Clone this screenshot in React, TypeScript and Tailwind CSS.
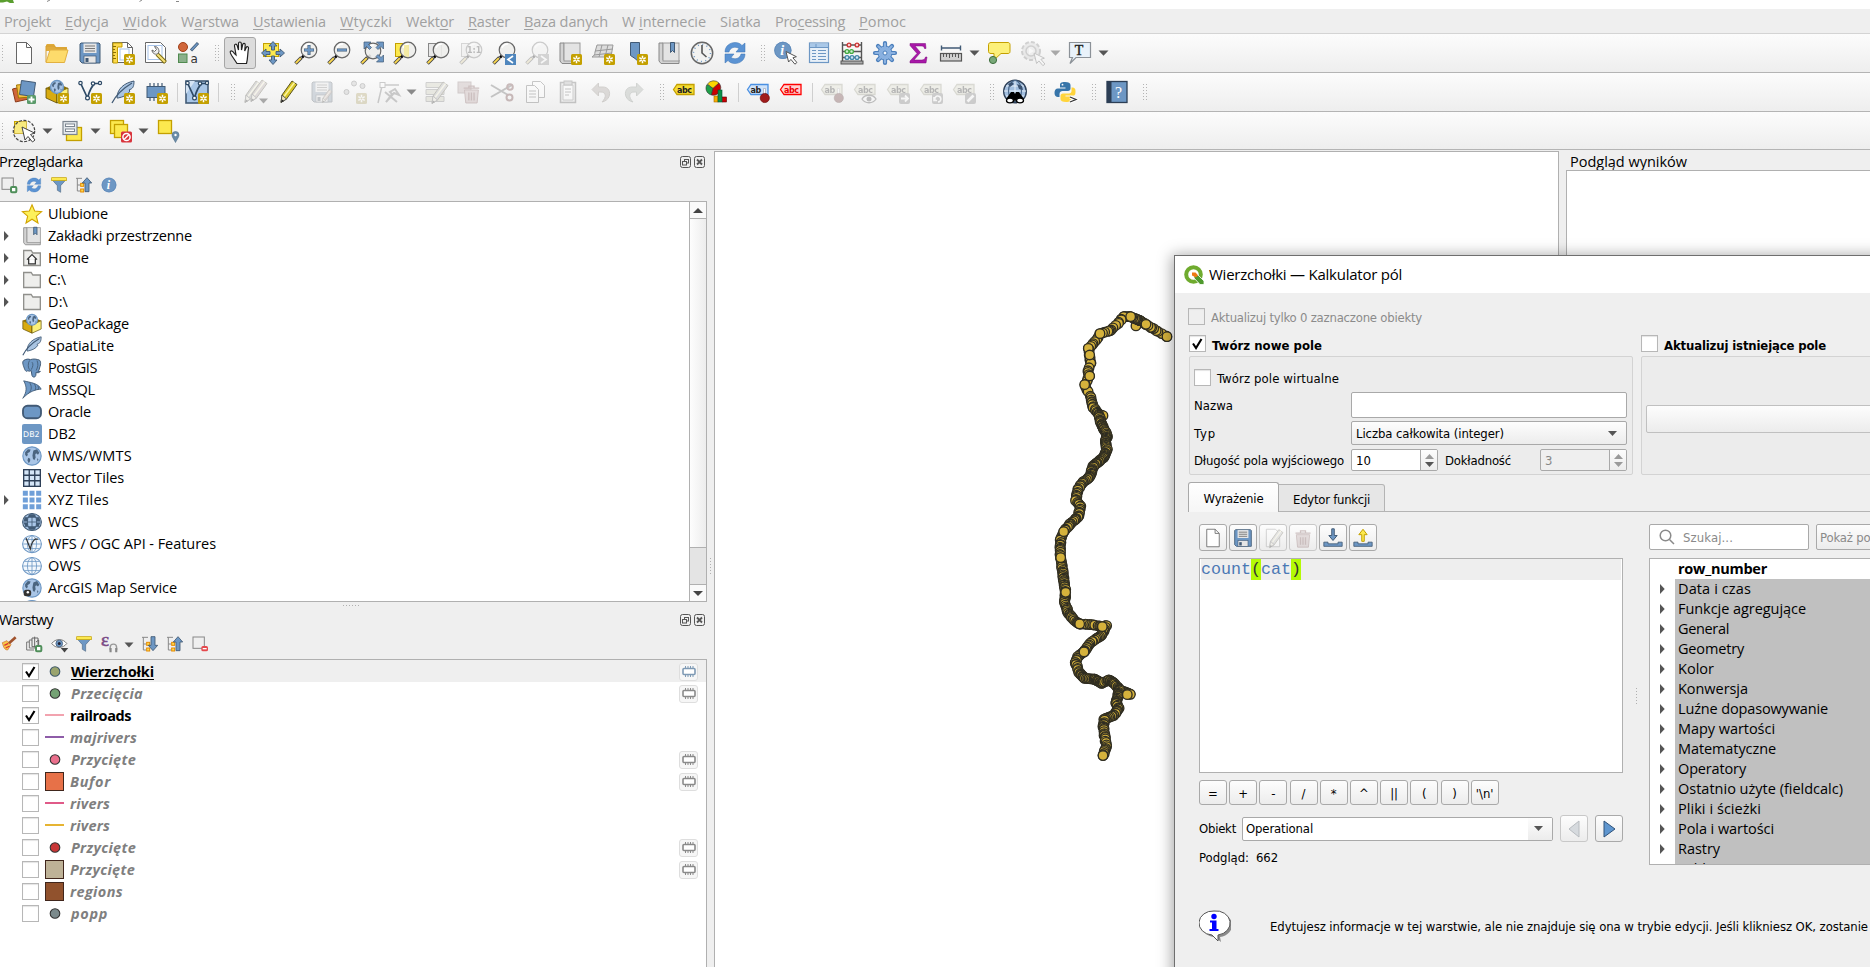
import React, { useLayoutEffect, useRef, useState } from "react";

type Kids = { children?: React.ReactNode };

/** Text that is tracked so that it takes up exactly `w` pixels. */
function T({ w, className = "", children }: Kids & { w: number; className?: string }) {
  const ref = useRef<HTMLSpanElement>(null);
  const [ls, setLs] = useState(0);
  useLayoutEffect(() => {
    const el = ref.current;
    if (!el) return;
    const n = (el.textContent || "").length;
    setLs((w + 1 - el.getBoundingClientRect().width) / n);
  }, [w]);
  return (
    <span ref={ref} className={"inline-block shrink-0 whitespace-pre " + className} style={{ letterSpacing: ls + "px" }}>
      {children}
    </span>
  );
}

function I({ children, s = 24, off = false, className = "" }: Kids & { s?: number; off?: boolean; className?: string }) {
  return (
    <svg
      width={s}
      height={s}
      viewBox="0 0 24 24"
      fill="none"
      className={"shrink-0 overflow-visible " + (off ? "opacity-30 grayscale-[60%] " : "") + className}
    >
      {children}
    </svg>
  );
}

/* ---------- shared drawing parts ---------- */
const BL = "#6d97c4";
const DB = "#415a75";

const NewBadge = () => (
  <g>
    <rect x="13" y="13" width="11" height="11" rx="1.500" fill="#c4a000" />
    <path d="M18.500 14.800v7.400M15.300 16.700l6.400 3.600M21.700 16.700l-6.400 3.600" stroke="#fff" strokeWidth="1.500" />
    <circle cx="18.500" cy="18.500" r="1" fill="#c4a000" />
  </g>
);
const Page = () => <path d="M4 1.500h11l5 5v16H4z" fill="#fff" stroke="#666" />;
const Lens = ({ x = 15, y = 9 }: { x?: number; y?: number }) => (
  <g>
    <path d="M8 16.500l2.500-2.500" stroke="#000" strokeWidth="2.500" />
    <path d="M1.500 22.500l6-6" stroke="#444" strokeWidth="3.600" />
    <path d="M1.800 22.200l5-5" stroke="#fcd94f" strokeWidth="1.900" />
    <circle cx={x} cy={y} r="7.800" fill="#eeeeec" fillOpacity="0.900" stroke="#666" strokeWidth="1.200" />
    <path d={`M${x - 5} ${y - 2}a6 6 0 0 1 6-4`} stroke="#fff" strokeWidth="1.500" />
  </g>
);
const Cursor = ({ x = 12, y = 11 }: { x?: number; y?: number }) => (
  <path transform={`translate(${x} ${y})`} d="M0 0l2.600 10.500 2.300-2.600 4 4.800 2-1.700-4-4.700 3.500-1.100z" fill="#fff" stroke="#555" />
);
const Disk = () => (
  <g>
    <path d="M3 2h18l1 1v19H4l-2-2V3z" fill={BL} stroke={DB} />
    <rect x="5.500" y="2.500" width="13" height="9.500" fill="#e6e6e6" />
    <path d="M7 5h10M7 7.500h10M7 10h10" stroke="#777" strokeWidth="1.100" />
    <rect x="6" y="15" width="12" height="7" fill="#e6e6e6" stroke={DB} strokeWidth="0.700" />
    <rect x="7.500" y="17" width="3" height="4" fill={DB} />
  </g>
);
const Globe = ({ cx = 12, cy = 12, r = 10, fill = "#a9c5e6" }: { cx?: number; cy?: number; r?: number; fill?: string }) => (
  <g>
    <circle cx={cx} cy={cy} r={r} fill={fill} stroke={BL} strokeWidth="1.400" />
    <g transform={`translate(${cx - r} ${cy - r}) scale(${r / 10})`} fill="#4b6580">
      <path d="M2.500 6l3-3.500 3 .5-1 2.500-2.500 1.500.5 2-1.500 1.500-1.500-2zM6 12l2 1v2.500l-1.500 2.500-1.500-3.500zM11.500 4l4-1.500 2.500 4-1.500 2-2-1.500-1 1.500.5 3-1.500 3-1.500-1.500-.5-3.500.500-3zM15.500 12.500l1.500 1-1 2.500z" />
    </g>
  </g>
);
const GridGlobe = ({ dark = false }: { dark?: boolean }) => (
  <g>
    <ellipse cx="12" cy="12" rx="11.300" ry="10.300" fill={dark ? "#a9c6e8" : "#f3f8fd"} stroke={dark ? DB : BL} strokeWidth="1.300" />
    <path d="M1.500 12h21M3.500 6.500h17M3.500 17.500h17M12 1.500v21" stroke={dark ? DB : BL} />
    <ellipse cx="12" cy="12" rx="5.500" ry="10" stroke={dark ? DB : BL} />
    {dark && <path d="M3 7h4v4H2zM17 7h4l1 4h-5zM2 13h5v4H4zM17 13h5l-2 4h-3zM8 3h8v3H8zM8 18h8v3H8z" fill={DB} />}
  </g>
);
const Feather = () => (
  <g>
    <path d="M6 18C6 9 13 3 23 1c0 5-1 7-3 8l-2 1 1 1c-2 4-7 6-12 7z" fill="#a9c4e2" stroke={DB} />
    <path d="M1 23C5 15 11 9 21 3" stroke={DB} strokeWidth="1.300" />
  </g>
);
const VNodes = ({ c = "#2e4a66" }: { c?: string }) => (
  <g stroke={c} strokeWidth="1.200">
    <path d="M2.500 3l7 15c2-8 4-12 8-15M15 3.500h7" strokeWidth="1.700" />
    <circle cx="2.500" cy="3" r="1.700" fill="#fff" />
    <circle cx="9.500" cy="18" r="1.900" fill="#fff" />
    <circle cx="15" cy="3.500" r="1.700" fill="#fff" />
    <circle cx="22" cy="3" r="1.600" fill="#fff" />
  </g>
);
const Box3 = () => (
  <g>
    <path d="M1 8l11 5v10L1 18z" fill="#d8ab10" stroke="#5c4a00" strokeWidth="0.800" />
    <path d="M23 8l-11 5v10l11-5z" fill="#fcf078" stroke="#5c4a00" strokeWidth="0.800" />
    <path d="M1 8l11-5 11 5-11 5z" fill="#8a6d00" />
    <Globe cx={12} cy={7} r={6.500} />
  </g>
);
const Pencil = ({ c = "#d8c62a" }: { c?: string }) => (
  <g>
    <path d="M5 15L15 1l5 3.500L9.500 19 4 22.500z" fill={c} stroke="#5a5320" />
    <path d="M7 16.500L17.500 2.500" stroke="#fbf4a0" strokeWidth="1.500" />
    <path d="M5 15l4.500 4L4 22.500z" fill="#efe5c0" stroke="#555" />
    <path d="M4 22.500l1-3 2 1.500z" fill="#222" />
  </g>
);
const Trash = () => (
  <g stroke="#a03a3a">
    <path d="M4 8h16l-1.500 15h-13z" fill="#d69a9a" />
    <path d="M3 6h18M9 6V3.500h6V6M9 11v9M12 11v9M15 11v9" strokeWidth="1.500" />
  </g>
);
const Refresh = () => (
  <g fill="#5b93d3" stroke="#3b73b3" strokeWidth="0.500">
    <path d="M2 11C2 5 7 1.500 12 1.500c3 0 5.500 1 7 3L22 2v9h-9l3-3.500c-4-2.500-9-1-10 3.500z" />
    <path d="M22 13c0 6-5 9.500-10 9.500-3 0-5.500-1-7-3L2 22v-9h9l-3 3.500c4 2.500 9 1 10-3.500z" />
  </g>
);
const Tag = ({ fill = "#fce94f", st = "#c4a000", tx = "#222", t = "abc" }: { fill?: string; st?: string; tx?: string; t?: string }) => (
  <g>
    <path d="M1.500 9.500L5 4.500h17v10H5z" fill={fill} stroke={st} strokeWidth="1.300" />
    <text x={t === "ab" ? 4.500 : 5} y="12.500" fontSize="8" fontWeight="700" fill={tx} fontFamily="DejaVu Sans, sans-serif" letterSpacing="-0.500">
      {t}
    </text>
  </g>
);
const Pin = () => (
  <g>
    <path d="M17.500 8.500l2 0v8h-2z" fill="#fff" stroke="#889" strokeWidth="0.500" />
    <circle cx="18.800" cy="18" r="4.600" fill="#a01c1c" stroke="#600" strokeWidth="0.600" />
  </g>
);
const Bookm = () => (
  <g>
    <path d="M2 2h4v17h16v3.500H4L2 20z" fill="#d3d3d3" stroke="#888" />
    <rect x="6" y="2" width="16" height="18" fill="#e3e3e3" stroke="#999" />
  </g>
);
const Funnel = () => (
  <g>
    <path d="M1.500 4h21l-8 9v10l-5-3v-7z" fill={BL} stroke={DB} strokeWidth="0.800" />
    <rect x="1" y="1" width="22" height="4.500" fill="#fce94f" stroke="#c4a000" />
  </g>
);
const TreeArrow = ({ down = false }: { down?: boolean }) => (
  <g>
    <path d="M0 2h9M2 2v19h4M2 12h4" stroke="#888" strokeWidth="1.500" />
    <rect x="7" y="9.500" width="4.500" height="4.500" fill="#fcd94f" stroke="#e58a00" strokeWidth="1.500" />
    <rect x="7" y="18" width="4.500" height="4.500" fill="#fcd94f" stroke="#e58a00" strokeWidth="1.500" />
    <path transform={down ? "rotate(180 16.500 11.500)" : undefined} d="M16.500 1l7 8h-4v13h-6V9h-4z" fill={BL} stroke={DB} strokeWidth="1.300" />
  </g>
);
const Info = () => (
  <g>
    <circle cx="12" cy="12" r="11" fill={BL} />
    <circle cx="12" cy="12" r="10.500" stroke="#5b87b8" />
    <text x="8.500" y="18.500" fontSize="18" fontStyle="italic" fontWeight="700" fill="#fff" fontFamily="Liberation Serif, serif">
      i
    </text>
  </g>
);
const Folder = () => <path d="M2 3h9l2 3h9v15H2z" fill="#eeeeec" stroke="#90908c" strokeWidth="1.600" />;

/* ---------- bars ---------- */
const Handle = () => (
  <svg width="18" height="18" viewBox="0 0 18 18" className="shrink-0">
    <path d="M5.500 1v17M8.500 1v17" stroke="#b4b4b4" strokeDasharray="1 2" />
  </svg>
);
const EdgeHandle = () => (
  <svg width="12" height="18" viewBox="0 0 12 18" className="shrink-0">
    <path d="M2.500 1v17" stroke="#b4b4b4" strokeDasharray="1 2" />
  </svg>
);
const Sep = () => <div className="h-[19px] w-2 shrink-0 border-l border-[#cfcfcf]" />;
const Down = ({ off = false, mid = false }: { off?: boolean; mid?: boolean }) => (
  <svg width="15" height="6" viewBox="0 0 15 6" className="shrink-0 overflow-visible">
    <path d="M-2.500 0.500h10L2.500 5.700z" fill={off ? "#a8a8a8" : mid ? "#8a8a8a" : "#555"} />
  </svg>
);
const S = ({ children }: Kids) => <div className="mr-[9px] h-6 w-6 shrink-0">{children}</div>;

const Bar = ({ children, last = false }: Kids & { last?: boolean }) => (
  <div
    className={
      "flex shrink-0 items-center border-b border-[#b4b4b4] bg-gradient-to-b from-[#fcfcfc] to-[#eeeeee] " + (last ? "h-[38px]" : "h-[39px]")
    }
  >
    <EdgeHandle />
    {children}
  </div>
);

const MENU: [string, string, string, number][] = [
  ["Pro", "j", "ekt", 46],
  ["", "E", "dycja", 43],
  ["", "W", "idok", 43],
  ["W", "a", "rstwa", 57],
  ["", "U", "stawienia", 72],
  ["", "W", "tyczki", 51],
  ["Wekt", "o", "r", 47],
  ["", "R", "aster", 41],
  ["", "B", "aza danych", 83],
  ["W ", "i", "nternecie", 83],
  ["Siatka", "", "", 40],
  ["Pro", "c", "essing", 69],
  ["", "P", "omoc", 46],
];

function Toolbar1() {
  return (
    <Bar>
      <S><I><path d="M4.500 1.500h10l5 5v16h-15z" fill="#fff" stroke="#666" /><path d="M14.500 1.500v5h5" stroke="#666" /></I></S>
      <S><I><path d="M1 4l1-1h7l2 3h11v4H1z" fill="#e0ab3c" /><path d="M1 21V5l2 0h6l2 2h10v3" stroke="#d6a032" /><path d="M1 21.500L5 9h18l-3.500 12.500z" fill="#fddb6b" stroke="#e2b040" /></I></S>
      <S><I><Disk /></I></S>
      <S><I><path d="M1.500 1.500h15l5 5v15h-20z" fill="#fff" stroke="#666" /><path d="M2 2h9v4H6.500v16H2z" fill="#fcd94f" stroke="#c4a000" /><path d="M2 5.500h3M2 8.500h2M2 11.500h3M2 14.500h2M2 17.500h3" stroke="#8a6d00" /><rect x="9" y="8" width="9" height="11" stroke="#a8c4ea" /><path d="M16.500 1.500v5h5" stroke="#666" /><NewBadge /></I></S>
      <S><I><path d="M1.500 3.500V1.500h15l5 5v15h-20z" fill="#fff" stroke="#666" /><rect x="4" y="4.500" width="14" height="14" stroke="#a8c4ea" fill="#fff" /><path d="M13 13l8.500 8.500" stroke="#7a6a10" strokeWidth="4" /><path d="M13 13l8 8" stroke="#f6e07a" strokeWidth="2.200" /><path d="M8 9c0 3 3 5 5.500 4l1.500-2c0-4-2-5.500-4.500-5.500l2 3-2 2z" fill="#eee" stroke="#666" /></I></S>
      <S><I><circle cx="6" cy="6" r="4.500" fill="#d0663a" stroke="#a0401a" /><rect x="1.500" y="13" width="8.500" height="8.500" fill="#8bb08b" stroke="#4f8a4f" /><path d="M14 9.500l7-7.500" stroke={DB} strokeWidth="3" /><path d="M14.500 9l6-6.500" stroke={BL} strokeWidth="1.600" /><text x="13.500" y="22" fontSize="12" fill="#333" fontFamily="DejaVu Sans, sans-serif">a</text></I></S>
      <Handle />
      <div className="-ml-1 mr-[5px] flex h-8 w-8 shrink-0 items-center justify-center rounded-[3px] border border-[#a6a6a6] bg-[#dcdcdc]">
        <I><path d="M9 22.500L4 15c-1.500-2.500-2.500-4-1.500-4.800 1-.7 2.500.3 4 2.500L8 14 6.500 5c-.3-2 2-2.500 2.600-.6L10.500 9V2.500c0-2 2.700-2 2.800 0L13.500 9l1.200-5.500c.5-1.800 2.700-1.300 2.500.5L16.700 10l1.500-3.500c.7-1.500 2.600-.8 2.300.8C19.500 12 20 17 18.500 22.500z" fill="#fff" stroke="#222" strokeWidth="1.200" /></I>
      </div>
      <S><I><rect x="2.500" y="2.500" width="15" height="13" fill="#fce94f" stroke="#c4a000" /><g fill={BL} stroke={DB} strokeWidth="0.900"><path d="M12 0.500l4 4.500h-2.500v4h-3V5H8zM12 23.500l4-4.500h-2.500v-4h-3v4H8zM0.500 12L5 8v2.500h4v3H5V16zM23.500 12L19 8v2.500h-4v3h4V16z" /></g></I></S>
      <S><I><Lens /><path d="M15 4v10M10 9h10" stroke={DB} strokeWidth="3" /><path d="M15 4.500v9M10.500 9h9" stroke={BL} strokeWidth="1.800" /></I></S>
      <S><I><Lens /><path d="M10 9h10" stroke={DB} strokeWidth="3" /><path d="M10.500 9h9" stroke={BL} strokeWidth="1.800" /></I></S>
      <S><I><Lens x={13} y={10} /><g fill={BL} stroke={DB} strokeWidth="0.700"><path d="M4 1h7L8.500 3.500l3 3-2 2-3-3L4 8zM23.500 1v7L21 5.500l-3 3-2-2 3-3L16.500 1zM23.500 21h-7l2.500-2.500-3-3 2-2 3 3 2.500-2.500z" /></g></I></S>
      <S><I><rect x="2.500" y="2.500" width="13" height="13" fill="#fce94f" stroke="#c4a000" /><Lens /><path d="M11 4h5v12a7 7 0 0 1-5-2z" fill="#f5e98a" fillOpacity="0.700" /></I></S>
      <S><I><rect x="2.500" y="2.500" width="13" height="13" fill="#e8e8e8" stroke="#888" /><Lens /></I></S>
      <S><I off><rect x="2.500" y="2.500" width="13" height="13" fill="#e8e8e8" stroke="#888" /><Lens /><text x="8" y="12" fontSize="8" fontWeight="700" fill="#333" fontFamily="DejaVu Sans">1:1</text></I></S>
      <S><I><Lens /><rect x="13" y="13" width="11" height="11" fill="#4f86bd" /><path d="M21 15l-5 3.500 5 3.500" stroke="#fff" strokeWidth="1.700" /></I></S>
      <S><I off><Lens /><rect x="13" y="13" width="11" height="11" fill="#888" /><path d="M16 15l5 3.500-5 3.500" stroke="#fff" strokeWidth="1.700" /></I></S>
      <S><I><Bookm /><NewBadge /></I></S>
      <S><I><path d="M6 4h16l-2 12H1c2-1 3-3 3-5z" fill="#dcdcdc" stroke="#999" /><path d="M4 10l18-2M3 14l18-2M11 4L8 16M17 4l-3 12" stroke="#999" /><NewBadge /></I></S>
      <S><I><path d="M6.500 1.500h9v20l-4.500-4-4.500-3z" fill={BL} stroke={DB} /><NewBadge /></I></S>
      <S><I><Bookm /><path d="M13.500 1.500h4v10l-2-2-2 2z" fill={BL} stroke={DB} /></I></S>
      <S><I><circle cx="12" cy="12" r="10.700" fill="#f2f2f0" stroke="#666" strokeWidth="1.500" /><circle cx="12" cy="12" r="8.500" stroke={BL} strokeDasharray="1 3.450" strokeWidth="1.500" /><path d="M12 4v8l4.500 4" stroke="#555" strokeWidth="1.600" /></I></S>
      <S><I><Refresh /></I></S>
      <Handle />
      <S><I><g transform="translate(-0.500 0) scale(0.780)"><Info /></g><Cursor x={12} y={10.500} /></I></S>
      <S><I><rect x="2.500" y="2" width="19" height="19.500" fill="#e8f0f8" stroke={BL} strokeWidth="1.200" /><rect x="3" y="2.500" width="18" height="4" fill="#a9c8e8" /><path d="M3 6.500h18M9 3v3" stroke={BL} /><path d="M5 9.500h4M11 9.500h8M5 12.500h4M11 12.500h8M5 15.500h4M11 15.500h8M5 18.500h4M11 18.500h8" stroke={BL} /></I></S>
      <S><I><path d="M2.500 1v20M21.500 1v20M2 4h20M2 10.500h20M2 16.500h20" stroke="#555" strokeWidth="1.400" /><rect x="1" y="20" width="22" height="3" fill="#aaa" stroke="#555" /><g fill="#fbd0d0" stroke="#c33" strokeWidth="1.300"><circle cx="9" cy="4" r="1.900" /><circle cx="17" cy="4" r="1.900" /></g><g fill="#d0f0d0" stroke="#4a4" strokeWidth="1.300"><circle cx="7" cy="10.500" r="1.900" /><circle cx="11.500" cy="10.500" r="1.900" /></g><g fill="#d0e4f6" stroke="#48a" strokeWidth="1.300"><circle cx="7" cy="16.500" r="1.900" /><circle cx="12" cy="16.500" r="1.900" /><circle cx="17" cy="16.500" r="1.900" /></g></I></S>
      <S><I><path d="M12 2v20M2 12h20M5 5l14 14M19 5L5 19" stroke="#4a7ebb" strokeWidth="4.200" strokeLinecap="round" /><circle cx="12" cy="12" r="7" fill="#8ab1e0" stroke="#4a7ebb" /><path d="M12 2.500v19M2.500 12h19M5.300 5.300l13.400 13.400M18.700 5.300L5.300 18.700" stroke="#8ab1e0" strokeWidth="2.200" strokeLinecap="round" /><circle cx="12" cy="12" r="2" fill="#f4f8fc" stroke="#4a7ebb" /></I></S>
      <S><I><path d="M4 2.500h15.500l.5 5h-1.500c-.5-2-1.500-2.500-3.500-2.500H9l5.500 6.500L8 19h7.500c2.500 0 3.500-1 4-3H21l-1 6H4v-2l7-7.500L4 4.500z" fill="#a818a8" stroke="#7a0a7a" strokeWidth="0.500" /></I></S>
      <S><I><path d="M2 7h20M2.500 4.500v5M21.500 4.500v5" stroke={DB} strokeWidth="1.400" /><rect x="1.500" y="12.500" width="21" height="7.500" fill="#d0d0d0" stroke="#555" strokeWidth="1.200" /><path d="M4.500 13v3M7.500 13v3M10.500 13v4M13.500 13v3M16.500 13v3M19.500 13v4" stroke="#555" /></I></S>
      <Down />
      <S><I><path d="M4 1.500h17c1.200 0 2 1 2 2v7c0 1.500-1 2-2 2h-7L7 19V12.500H4c-1.500 0-2.500-.8-2.500-2v-7c0-1 1-2 2.500-2z" fill="#fcf07a" stroke="#c4a000" /><circle cx="6" cy="19" r="3.600" fill="#78a878" stroke="#3f6f3f" /></I></S>
      <S><I off><circle cx="11" cy="10" r="9" fill="#ccc" stroke="#777" strokeDasharray="4 2" strokeWidth="2" /><circle cx="11" cy="10" r="5" fill="#ddd" stroke="#777" strokeWidth="1.500" /><path d="M9 7l5 3-5 3z" fill="#fff" /><Cursor x={14} y={12} /></I></S>
      <Down off />
      <S><I><path d="M1.500 1.500h21v15H8l-6 6 2.500-6h-3z" fill="#e9f2fa" stroke="#8c9298" strokeWidth="1.200" /><text x="6.800" y="13.800" fontSize="14" fill="#222" stroke="#222" strokeWidth="0.400" fontFamily="Liberation Serif, serif">T</text></I></S>
      <Down />
    </Bar>
  );
}

function Toolbar2() {
  return (
    <Bar>
      <S><I><path d="M0.500 9l13-3 3 13-13 3z" fill="#d0663a" stroke="#8a3a1a" /><path d="M4.500 5l12-1 2 13-12 1z" fill="#f2c040" stroke="#a07800" /><path d="M9.500 0.500l14 2-2 14-14-2z" fill={BL} stroke={DB} /><rect x="15" y="15" width="9" height="9" rx="1.500" fill="#5a9a6a" /><path d="M19.500 16.500v6M16.500 19.500h6" stroke="#fff" strokeWidth="1.800" /></I></S>
      <S><I><Box3 /><NewBadge /></I></S>
      <S><I><VNodes /><NewBadge /></I></S>
      <S><I><Feather /><NewBadge /></I></S>
      <S><I><path d="M6 3v18M10 3v18M14 3v18M18 3v18" stroke={DB} strokeWidth="1.200" /><rect x="3" y="6.500" width="18" height="11" fill={BL} stroke={DB} /><NewBadge /></I></S>
      <Sep />
      <S><I><rect x="1" y="1" width="22" height="22" fill="#a9c6e6" stroke={DB} strokeWidth="1.600" /><path d="M1 1h9L1 14z" fill="#d5e4f4" /><VNodes /><NewBadge /></I></S>
      <Sep />
      <Handle />
      <S><I off><g transform="translate(-3 0)"><Pencil c="#999" /></g><g transform="translate(3 -1)"><Pencil c="#b99" /></g><path d="M15 18.500h9l-4.500 5z" fill="#000" /></I></S>
      <S><I><Pencil /></I></S>
      <S><I off><Disk /><g transform="translate(10 9) scale(0.600)"><Pencil c="#c99" /></g></I></S>
      <S><I off><g fill="#bbb" stroke="#666"><circle cx="3.500" cy="12" r="2.500" /><circle cx="11" cy="3.500" r="2.500" /><circle cx="19.500" cy="6" r="2.500" /></g><NewBadge /></I></S>
      <S><I off><path d="M6 6L2 23M8 5h15" stroke="#666" strokeWidth="1.500" /><rect x="4" y="2.500" width="5" height="5" fill="#fff" stroke="#666" /><path d="M10 22l8-9 5 2-4-6-5 3 2 2zM9 12l12 10" stroke="#666" strokeWidth="2" /></I></S>
      <Down mid />
      <S><I off><path d="M2 2.500h18v5H2zM2 9.500h18v5H2zM2 16.500h18v5H2z" fill="#cc9" stroke="#777" /><g transform="translate(4 1)"><Pencil c="#aaa" /></g></I></S>
      <S><I off><rect x="1" y="2" width="13" height="11" fill="#c99" stroke="#966" /><g transform="translate(4 3) scale(0.870)"><Trash /></g></I></S>
      <S><I off><path d="M1 5l17 10M1 17L22 5" stroke="#555" strokeWidth="2" /><circle cx="19.500" cy="17.500" r="3" stroke="#922" strokeWidth="2" /><circle cx="20" cy="7" r="2.800" stroke="#922" strokeWidth="2" /></I></S>
      <S><I off><path d="M9.500 1.500h8l4 4v12h-12z" fill="#fff" stroke="#555" /><path d="M3.500 5.500h8l4 4v13h-12z" fill="#fff" stroke="#555" /><path d="M6 11h7M6 14h7M6 17h7" stroke="#555" /></I></S>
      <S><I off><rect x="4.500" y="2.500" width="15" height="20" fill="#ddd" stroke="#555" strokeWidth="1.500" /><path d="M7 5h10v15H7z" fill="#fff" stroke="#777" /><rect x="8" y="1" width="8" height="4" fill="#aaa" stroke="#555" /><path d="M9 9h6M9 12h6M9 15h4" stroke="#555" /></I></S>
      <S><I off><path d="M3 9.500L9.500 3v4H14c9 0 9 13-1 15 5-5 4-10-1-10H9.500v4z" fill="#a98" stroke="#876" /></I></S>
      <S><I off><path d="M21 9.500L14.500 3v4H10C1 7 1 20 11 22 6 17 7 12 12 12h2.500v4z" fill="#9a9" stroke="#787" /></I></S>
      <div className="-mr-[1px] flex shrink-0"><Handle /></div>
      <S><I><Tag fill="#f5dc35" /></I></S>
      <S><I><path d="M8 8.500L2.500 4A7.500 7.500 0 0 1 14 3z" fill="#fcd500" stroke="#333" strokeWidth="0.600" /><path d="M8 8.500L2 4.500A7 7 0 0 0 6.500 15z" fill="#1fa04a" stroke="#333" strokeWidth="0.600" /><path d="M8 8.500L14 3a7.500 7.500 0 0 1-7.500 12z" fill="#c00" stroke="#333" strokeWidth="0.600" /><rect x="9" y="16" width="4" height="6" fill="#f6b000" stroke="#a60" strokeWidth="0.600" /><rect x="13" y="10" width="4" height="12" fill="#0d9048" stroke="#053" strokeWidth="0.600" /><rect x="17.500" y="17" width="4" height="5" fill="#c00" stroke="#500" strokeWidth="0.600" /></I></S>
      <Sep />
      <S><I><Tag fill="#cfe3fa" st="#4a90e2" t="ab" /><Pin /></I></S>
      <S><I><Tag fill="#ffd0d0" st="#f00" tx="#e00" /></I></S>
      <Sep />
      <S><I off><Tag fill="#dda" st="#996" t="ab" /><Pin /></I></S>
      <S><I off><Tag fill="#dda" st="#996" /><path d="M9 19c3-5 11-5 14 0-3 5-11 5-14 0z" fill="#fff" stroke="#444" strokeWidth="1.300" /><circle cx="16" cy="19" r="2.500" fill="#444" /></I></S>
      <S><I off><Tag fill="#dda" st="#996" /><rect x="13" y="13" width="11" height="11" rx="2" fill="#777" /><path d="M15 18.500h7M19 15.500l3 3-3 3" stroke="#fff" strokeWidth="1.800" /></I></S>
      <S><I off><Tag fill="#dda" st="#996" /><rect x="13" y="13" width="11" height="11" rx="2" fill="#777" /><path d="M16 20a3 3 0 1 1 3 2M15 17v3.500h3" stroke="#fff" strokeWidth="1.600" /></I></S>
      <S><I off><Tag fill="#dda" st="#996" /><rect x="13" y="13" width="11" height="11" rx="2" fill="#777" /><path d="M15.500 21.500l6-6" stroke="#fff" strokeWidth="2.600" /></I></S>
      <Handle />
      <S><I><circle cx="12" cy="11.500" r="11.300" fill="#a3bfdf" stroke="#2e4058" strokeWidth="1.400" /><path d="M1 11h22M3 6h18M12 0v22M3 16h18" stroke="#eef4fb" strokeWidth="0.900" /><ellipse cx="12" cy="11" rx="6.500" ry="10.500" stroke="#4c6a8c" strokeWidth="1.200" /><path d="M5 4l4-2 2 2-4 3zM14 4l5 2 1 4-4-1z" fill="#3b5270" /><path d="M8 12h3l1 2 1-2h3l5 7v3h-8l-1-2-1 2H3v-3z" fill="#000" /><ellipse cx="7" cy="20.500" rx="3.500" ry="2.400" fill="#fff" stroke="#000" strokeWidth="1.300" /><ellipse cx="17" cy="20.500" rx="3.500" ry="2.400" fill="#fff" stroke="#000" strokeWidth="1.300" /></I></S>
      <Handle />
      <S><I><path d="M11 2c-4 0-5 1-5 3v2.500h5.500v1H4c-2.500 0-3.500 2-3.500 4.500S2 17 4 17h1.500v-3c0-2 1.500-3 3-3H14c1.500 0 2.500-1 2.500-2.500V5c0-2-2-3-5.500-3z" fill="#3775a9" /><circle cx="8.500" cy="4.700" r="0.900" fill="#fff" /><path d="M12 22c4 0 5-1 5-3v-2.500h-5.500v-1h7.500c2.500 0 2.500-2 2.500-4.500 0-2-1-3.500-3-3.500H17.500V11c0 1.500-1 2.500-2.500 2.500H9c-1.500 0-2.500 1-2.500 2.500V19c0 2 2 3 5.500 3z" fill="#ffd43b" /><path d="M16 17l6 2.500-6 2.500" stroke="#fff" strokeWidth="3" /><path d="M16 17l6 2.500-6 2.500" stroke="#333" strokeWidth="1.300" /></I></S>
      <Handle />
      <S><I><rect x="2" y="1.500" width="20" height="21" fill={BL} stroke="#2c3e55" strokeWidth="1.300" /><rect x="2" y="1.500" width="4.500" height="21" fill="#2c3e55" /><text x="10" y="17.500" fontSize="16" fill="#fff" fontFamily="Liberation Serif, serif">?</text></I></S>
      <Handle />
    </Bar>
  );
}

function Toolbar3() {
  return (
    <Bar last>
      <S><I><rect x="2.500" y="2.500" width="12" height="12" fill="#fce94f" stroke="#c4a000" /><circle cx="12" cy="12" r="10.700" fill="#eee" fillOpacity="0.300" stroke="#444" strokeWidth="1.200" strokeDasharray="3 1.500" /><path d="M10 8l3 13 3-3.500 4.500 5.500 2.500-2-4.500-5.500 4-1.500z" fill="#fff" stroke="#444" /></I></S>
      <Down />
      <S><I><rect x="6.500" y="8.500" width="15" height="13" fill="#fce94f" stroke="#c4a000" strokeWidth="1.300" /><rect x="3" y="2.500" width="14" height="13" fill="#e4e8ec" stroke="#7c8590" strokeWidth="1.200" /><rect x="5.500" y="5" width="9" height="2.500" fill="#fff" stroke="#7c8590" /><rect x="5.500" y="10" width="9" height="2.500" fill="#fff" stroke="#7c8590" /></I></S>
      <Down />
      <S><I><rect x="2.500" y="1.500" width="13" height="13" fill="#fce94f" stroke="#c4a000" strokeWidth="1.300" /><rect x="6.500" y="5.500" width="13" height="13" fill="#fce94f" stroke="#c4a000" strokeWidth="1.300" /><rect x="13" y="12.500" width="11" height="11" rx="1.500" fill="#d8343c" /><circle cx="18.500" cy="18" r="3.600" stroke="#fff" strokeWidth="1.500" /><path d="M16 20.500l5-5" stroke="#fff" strokeWidth="1.500" /></I></S>
      <Down />
      <S><I><rect x="2.500" y="1.500" width="13" height="13" fill="#fce94f" stroke="#c4a000" strokeWidth="1.300" /><path d="M19.500 23.500c-2-4-3.500-5.500-3.500-7.500a3.500 3.500 0 0 1 7 0c0 2-1.500 3.500-3.500 7.500z" fill="#6a8ca8" stroke="#4f6f8a" strokeWidth="0.600" /><circle cx="19.500" cy="16" r="1.200" fill="#fff" /></I></S>
    </Bar>
  );
}

/* ---------- docks ---------- */
const DockButtons = () => (
  <div className="mr-[2px] flex gap-[3px]">
    <svg width="11" height="12" viewBox="0 0 11 12" fill="none" stroke="#555"><rect x="0.500" y="0.500" width="10" height="11" rx="2" /><rect x="4.500" y="3.500" width="4" height="3.500" /><rect x="2.500" y="5.500" width="4" height="3.500" fill="#efefef" /></svg>
    <svg width="11" height="12" viewBox="0 0 11 12" fill="none" stroke="#555"><rect x="0.500" y="0.500" width="10" height="11" rx="2" /><path d="M3 3.500l5 5M8 3.500l-5 5" strokeWidth="1.800" /></svg>
  </div>
);

const RightTri = ({ className = "" }: { className?: string }) => (
  <svg width="6" height="10" viewBox="0 0 6 10" className={"shrink-0 " + className}><path d="M0 0L4.700 5 0 10z" fill="#555" /></svg>
);

const TREE: [string, number, boolean, React.ReactNode][] = [
  ["Ulubione", 59, false, <path d="M12 1l3.200 7.500 8.300.7-6.300 5.300 2 8.300L12 18.300l-7.200 4.500 2-8.300L.5 9.200l8.300-.7z" fill="#fdf15a" stroke="#d2a400" strokeWidth="1.300" />],
  ["Zakładki przestrzenne", 143, true, <g><Bookm /><path d="M14 1.500h4v9l-2-2-2 2z" fill={BL} stroke={DB} /></g>],
  ["Home", 40, true, <g><Folder /><path d="M6 14l6-6 6 6M8 13v6h8v-6" stroke="#333" strokeWidth="1.500" fill="#fff" /></g>],
  ["C:\\", 17, true, <Folder />],
  ["D:\\", 19, true, <Folder />],
  ["GeoPackage", 80, false, <Box3 />],
  ["SpatiaLite", 65, false, <Feather />],
  ["PostGIS", 48, false, <g><path d="M2 3c3-2 6-2 8-1 3-1 6-1 9 0 4 0 4 5 2 10 0 2-1 3-2 4h3c-1 2-4 2-5 1l-.5 4c-.5 2.500-4 2.500-4.500 0L11 15c-2 1-3 1-4 0-1 2-3 1-4-2S-.5 5 2 3z" fill={BL} stroke={DB} strokeWidth="1.200" /><path d="M9 3c-2 3-2 9 0 11M18 3c2 4 1 8-1 12M12 5c2 2 1 6-1 9" stroke={DB} /></g>],
  ["MSSQL", 46, false, <g><path d="M2 1c8 2 18 3 21 10-6 0-15 3-22 11 5-8 5-14 1-21z" fill={BL} stroke={DB} /><path d="M9 3c3 4 3 9-1 13M15 5c2 3 2 6 0 8M19 7c1 2 1 3 0 5" stroke={DB} /></g>],
  ["Oracle", 42, false, <rect x="1.200" y="4.500" width="21.600" height="15" rx="5.500" fill={BL} stroke={DB} strokeWidth="2.200" />],
  ["DB2", 27, false, <g><rect width="24" height="24" rx="2.500" fill={BL} /><text x="1.300" y="15" fontSize="9.500" fill="#fff" fontFamily="DejaVu Sans, sans-serif">DB2</text></g>],
  ["WMS/WMTS", 83, false, <Globe r={11} />],
  ["Vector Tiles", 75, false, <g><rect x="2" y="2" width="20" height="20" fill="#d4e5f7" stroke="#2e4058" strokeWidth="1.600" /><path d="M8.700 2v20M15.300 2v20M2 8.700h20M2 15.300h20" stroke="#2e4058" strokeWidth="1.600" /></g>],
  ["XYZ Tiles", 60, true, <path d="M1 1h6v6H1zM9 1h6v6H9zM17 1h6v6h-6zM1 9h6v6H1zM9 9h6v6H9zM17 9h6v6h-6zM1 17h6v6H1zM9 17h6v6H9zM17 17h6v6h-6z" fill="#6f9fd8" />],
  ["WCS", 30, false, <GridGlobe dark />],
  ["WFS / OGC API - Features", 167, false, <g><GridGlobe /><path d="M5 5l5 13c1-6 3-10 6-12h3" stroke="#333" strokeWidth="1.500" /></g>],
  ["OWS", 32, false, <GridGlobe />],
  ["ArcGIS Map Service", 128, false, <g><Globe r={11} /><rect x="2" y="14" width="9" height="8" rx="3" fill="#333" /><circle cx="7" cy="17" r="1.500" fill="#fff" /></g>],
];

const LAYERS: [string, number, string, string, boolean, boolean][] = [
  ["Wierzchołki", 82, "dot", "#9aa46e", true, true],
  ["Przecięcia", 71, "dot", "#74a274", false, true],
  ["railroads", 60, "line", "#f2a3af", true, false],
  ["majrivers", 66, "line", "#8e5ca8", false, false],
  ["Przycięte", 64, "dot", "#ea6f8c", false, true],
  ["Bufor", 40, "sq", "#e77148", false, true],
  ["rivers", 39, "line", "#e05a88", false, false],
  ["rivers", 39, "line", "#e6b432", false, false],
  ["Przycięte", 64, "dot", "#c83737", false, true],
  ["Przycięte", 64, "sq", "#beb297", false, true],
  ["regions", 52, "sq", "#91522d", false, false],
  ["popp", 36, "dot", "#7b8a8c", false, false],
];

const Check = ({ on = false, off = false }: { on?: boolean; off?: boolean }) => (
  <div className={"h-[17px] w-[17px] shrink-0 border border-[#b7b7b7] shadow-[inset_0_1px_1px_#e4e4e4] " + (off ? "bg-[#efefef]" : "bg-white")}>
    {on && (
      <svg width="15" height="15" viewBox="0 0 15 15" fill="none"><path d="M3 7.500l3 4.500L11.500 3" stroke="#000" strokeWidth="2.100" /></svg>
    )}
  </div>
);

const Symbol = ({ kind, color, sel }: { kind: string; color: string; sel: boolean }) => (
  <svg width="20" height="20" viewBox="0 0 20 20" className="shrink-0">
    {kind === "dot" && <circle cx="10" cy="9.500" r="4.800" fill={color} stroke={sel ? "#3f5a6b" : "#333"} strokeWidth="1.100" />}
    {kind === "line" && <path d="M0 9h19" stroke={color} strokeWidth="2" />}
    {kind === "sq" && <rect x="0.500" y="0.500" width="18" height="18" fill={color} stroke="#40261c" />}
  </svg>
);

function BrowserDock() {
  return (
    <>
      <div className="flex h-[24px] shrink-0 items-center justify-between pr-0">
        <T w={83} className="-ml-[1px]">Przeglądarka</T>
        <DockButtons />
      </div>
      <div className="flex h-[27px] shrink-0 items-start gap-[9px] pl-[1px] pt-[3px]">
        <I s={16}><rect x="1.500" y="1.500" width="17" height="17" stroke="#888" strokeWidth="1.500" /><rect x="15" y="15" width="8" height="8" rx="1.500" fill="#fff" stroke="#4f8f5a" strokeWidth="3" /></I>
        <I s={16}><Refresh /></I>
        <I s={16}><Funnel /></I>
        <I s={16}><TreeArrow /></I>
        <I s={16}><Info /></I>
      </div>
      <div className="flex h-[401px] shrink-0 border-y border-r border-[#b0b0b0] bg-white">
        <div className="flex-1 overflow-hidden pt-[1px]">
          {TREE.map(([name, w, exp, icon]) => (
            <div key={name} className="flex h-[22px] items-center">
              <div className="w-[22px] pl-[4px]">{exp && <RightTri />}</div>
              <I s={20}>{icon}</I>
              <T w={w} className="ml-[6px]">{name}</T>
            </div>
          ))}
          <div className="pl-[22px]"><I s={20}><GridGlobe /></I></div>
        </div>
        <div className="flex w-[17px] flex-col border-l border-[#b0b0b0]">
          <div className="flex h-[17px] items-center justify-center border-b border-[#b0b0b0] bg-[#fafafa]">
            <svg width="10" height="5"><path d="M0 5L5 0l5 5z" fill="#444" /></svg>
          </div>
          <div className="h-[328px] bg-gradient-to-r from-[#fdfdfd] to-[#ededed]" />
          <div className="flex-1 border-y border-[#b0b0b0] bg-[#e4e4e4]" />
          <div className="flex h-[16px] items-center justify-center bg-[#fafafa]">
            <svg width="10" height="5"><path d="M0 0l5 5 5-5z" fill="#444" /></svg>
          </div>
        </div>
      </div>
    </>
  );
}

function LayersDock() {
  return (
    <>
      <div className="-ml-[3px] flex h-[7px] shrink-0 justify-center pt-[3px]">
        <svg width="18" height="1"><path d="M0 0.500h18" stroke="#b0b0b0" strokeDasharray="1 2" /></svg>
      </div>
      <div className="flex h-[21px] shrink-0 items-center justify-between">
        <T w={53} className="-ml-[1px]">Warstwy</T>
        <DockButtons />
      </div>
      <div className="flex h-[29px] shrink-0 items-start pl-[1px] pt-[6px]">
        <I s={16} className="mr-[9px]"><path d="M2 10l7-3 6 6-5 8c-4 0-6-3-8-11z" fill="#f7c948" stroke="#c96a2a" /><path d="M5 14l6-3M7 18l6-3" stroke="#d33" strokeWidth="2" /><path d="M12 11L22 2" stroke="#a0522d" strokeWidth="4" /></I>
        <I s={16} className="mr-[9px]"><path d="M5 9H1v12h11M5 6h4M5 6v12h10" stroke="#777" strokeWidth="1.500" /><path d="M9 3h9v13H9zM13 1v16M15 9l4-3v11" stroke="#666" strokeWidth="1.500" /><rect x="15" y="15" width="8" height="8" rx="1.500" fill="#fff" stroke="#4f8f5a" strokeWidth="3" /></I>
        <I s={18} className="mr-[7px]"><path d="M1 10c5-7 15-7 20 0-5 7-15 7-20 0z" fill="#fff" stroke="#777" strokeWidth="1.300" /><circle cx="11" cy="10" r="4.500" fill={BL} stroke={DB} /><circle cx="11" cy="10" r="2" fill="#223" /><path d="M13 16h10l-5 6z" fill="#444" /></I>
        <I s={16} className="mr-[9px]"><Funnel /></I>
        <I s={17} className="mr-[6px]"><text x="0" y="14" fontSize="27" fill="#7a4a86" stroke="#7a4a86" strokeWidth="0.800" fontFamily="Liberation Serif, serif">ε</text><path d="M13 20v-4a4.500 4.500 0 0 1 9 0v4" stroke="#999" strokeWidth="2" /><path d="M12 17h3v6h-3zM20 17h3v6h-3z" fill="#888" /></I>
        <svg width="10" height="6" viewBox="0 0 10 6" className="mr-[8px] mt-[6px]"><path d="M0.500 0.500h9L5 5.500z" fill="#555" /></svg>
        <I s={16} className="mr-[9px]"><TreeArrow down /></I>
        <I s={16} className="mr-[9px]"><TreeArrow /></I>
        <I s={16}><rect x="1.500" y="1.500" width="17" height="17" stroke="#888" strokeWidth="1.500" /><rect x="14" y="15" width="10" height="8" rx="2.500" fill="#e5484d" /><path d="M16 19h6" stroke="#fff" strokeWidth="2" /></I>
      </div>
      <div className="flex-1 overflow-hidden border-r border-t border-[#b0b0b0] bg-white">
        {LAYERS.map(([name, w, kind, color, on, chip], i) => (
          <div key={i} className={"flex h-[22px] items-center pl-[22px] pt-[1px] " + (i === 0 ? "bg-[#efefef]" : "")}>
            <Check on={on} />
            <div className={"ml-[6px] flex " + (kind === "dot" ? "w-[26px]" : "w-[25px]")}><Symbol kind={kind} color={color} sel={i === 0} /></div>
            <T w={w} className={"font-bold " + (on ? "text-black " : "italic text-[#7f7f7f] ") + (i === 0 ? "underline decoration-1 underline-offset-2" : "")}>{name}</T>
            <div className="flex-1" />
            {chip && (
              <div className="mr-[8px] flex h-[18px] w-[19px] items-center justify-center rounded-[3px] border border-[#dedede] bg-[#f6f6f6]">
                <svg width="14" height="11" viewBox="0 0 14 11" fill="none" stroke={i === 0 ? "#7f9ab5" : "#8a8a8a"}><path d="M3.500 0v11M6 0v11M8.500 0v11M11 0v11" /><rect x="1" y="2.500" width="12" height="6" rx="1" fill="#fff" strokeWidth="1.600" /></svg>
              </div>
            )}
          </div>
        ))}
      </div>
    </>
  );
}

/* ---------- map ---------- */
type Leg = { step: number; pts: [number, number][] };
const LEGS: Leg[] = [
  { step: 9, pts: [[381, 140], [350, 122], [318, 103]] },
  { step: 4, pts: [[318, 103], [300, 92], [287, 110]] },
  { step: 3, pts: [[300, 92], [272, 80], [250, 80]] },
  { step: 7, pts: [[250, 80], [235, 100], [210, 122], [180, 131]] },
  { step: 10, pts: [[180, 131], [165, 155], [145, 175], [149, 195], [153, 220], [143, 247], [149, 258], [134, 284], [143, 305], [155, 330]] },
  { step: 4, pts: [[155, 330], [160, 352], [178, 375], [193, 378]] },
  { step: 3.200, pts: [[178, 375], [182, 395], [196, 425], [201, 440], [196, 455], [201, 478], [190, 503], [160, 528], [150, 560]] },
  { step: 4.500, pts: [[150, 560], [128, 577], [113, 600], [108, 632], [121, 648], [115, 680], [90, 702], [71, 725]] },
  { step: 5.500, pts: [[71, 725], [62, 750], [60, 775], [62, 803], [66, 828]] },
  { step: 3.500, pts: [[66, 828], [70, 860], [77, 907], [74, 935], [85, 970], [108, 996], [119, 1002]] },
  { step: 7, pts: [[119, 1002], [155, 1004], [187, 1010], [200, 1007]] },
  { step: 4.500, pts: [[200, 1007], [185, 1035], [155, 1055], [132, 1086], [112, 1100], [107, 1118], [118, 1148]] },
  { step: 3.500, pts: [[118, 1148], [135, 1165], [165, 1168], [185, 1180], [207, 1170], [225, 1182], [239, 1200], [275, 1214]] },
  { step: 3.500, pts: [[239, 1200], [228, 1238], [236, 1255], [222, 1276]] },
  { step: 4.500, pts: [[222, 1276], [193, 1287], [190, 1310], [194, 1340], [200, 1370], [189, 1397]] },
];
const BIG: [number, number][] = [
  [381, 140], [318, 103], [272, 80], [180, 131], [145, 175], [149, 195], [149, 258], [134, 284], [71, 725], [62, 803],
  [77, 907], [119, 1002], [187, 1010], [132, 1086], [262, 1214], [189, 1397],
];
function chain(): [number, number][] {
  const out: [number, number][] = [];
  let k = 1;
  for (const leg of LEGS) {
    for (let i = 1; i < leg.pts.length; i++) {
      const [x0, y0] = leg.pts[i - 1];
      const [x1, y1] = leg.pts[i];
      const len = Math.hypot(x1 - x0, y1 - y0);
      let d = 0;
      while (d < len) {
        const t = d / len;
        out.push([x0 + (x1 - x0) * t + ((k % 5) - 2) * 0.700, y0 + (y1 - y0) * t]);
        k = (k * 73 + 41) % 997;
        d += leg.step * (0.350 + (k % 100) / 75);
      }
    }
  }
  return out.concat(BIG);
}
const MapCanvas = () => (
  <svg width="843" height="815" viewBox="715 152 843 815" className="block">
    <g transform="translate(1040 290) scale(0.3333)" fill="#d5b23c" stroke="#2f2d22" strokeWidth="4">
      {chain().map(([x, y], i) => <circle key={i} cx={x} cy={y} r="14.300" />)}
    </g>
  </svg>
);

/* ---------- dialog ---------- */
const Field = "rounded-[2px] border border-[#a9a9a9] ";
const Grad = "bg-gradient-to-b from-[#fdfdfd] to-[#ececec] ";
const Btn = ({ children, off = false, h = "h-[27px]" }: Kids & { off?: boolean; h?: string }) => (
  <div className={"flex w-7 shrink-0 items-center justify-center rounded-[3px] border " + h + " " + Grad + (off ? "border-[#c8c8c8]" : "border-[#a9a9a9]")}>{children}</div>
);
const Spin = ({ v, off = false }: { v: string; off?: boolean }) => (
  <div className={Field + "flex h-[22px] w-[87px] shrink-0 items-stretch overflow-hidden " + (off ? "bg-[#efefef] text-[#888]" : "bg-white")}>
    <div className="flex flex-1 items-center pl-[4px] pt-[1px]">{v}</div>
    <div className={"flex w-[17px] flex-col items-center justify-center gap-[3px] border-l border-[#a9a9a9] " + Grad}>
      <svg width="9" height="5"><path d="M0 5l4.500-5L9 5z" fill="#9a9a9a" /></svg>
      <svg width="9" height="5"><path d="M0 0l4.500 5L9 0z" fill={off ? "#9a9a9a" : "#555"} /></svg>
    </div>
  </div>
);

const FUNCS: [string, number][] = [
  ["Data i czas", 72], ["Funkcje agregujące", 127], ["General", 50], ["Geometry", 65], ["Kolor", 35], ["Konwersja", 69],
  ["Luźne dopasowywanie", 149], ["Mapy wartości", 96], ["Matematyczne", 97], ["Operatory", 67],
  ["Ostatnio użyte (fieldcalc)", 164], ["Pliki i ścieżki", 82], ["Pola i wartości", 95], ["Rastry", 41], ["Tablice", 45],
];

const Logo = () => (
  <svg width="20" height="20" viewBox="0 0 20 20" fill="none" className="shrink-0">
    <circle cx="9.500" cy="9.500" r="7.300" stroke="#6fab2e" strokeWidth="4" />
    <path d="M10 10h4l6 6v3.500h-4L10 13z" fill="#4f9a2e" stroke="#fff" strokeWidth="0.800" />
    <path d="M8 7.500h3.500l2.500 2.800-2 2.200-4-2z" fill="#ee7913" />
  </svg>
);

function Dialog() {
  return (
    <div className="absolute left-[1174px] top-[255px] h-[760px] w-[760px] border border-[#6e6e6e] bg-[#efefef] font-['DejaVu_Sans_Condensed','DejaVu_Sans',sans-serif] text-[13px] leading-[16px] text-black shadow-[0_2px_14px_2px_rgba(0,0,0,0.35)]">
      <div className="flex h-[37px] items-center bg-white pl-[9px] font-['Open_Sans',sans-serif] text-[15px]">
        <Logo />
        <T w={192} className="-mt-[1px] ml-[5px]">Wierzchołki — Kalkulator pól</T>
      </div>
      <div className="mt-[15px] flex h-[17px] items-center pl-[13px]">
        <Check off />
        <T w={210} className="ml-[6px] mt-[2px] text-[#8b8b8b]">Aktualizuj tylko 0 zaznaczone obiekty</T>
      </div>
      <div className="mt-[10px] flex pl-[14px]">
        <div className="w-[444px] shrink-0">
          <div className="flex h-[17px] items-center"><Check on /><T w={109} className="ml-[6px] mt-[5px] font-bold">Twórz nowe pole</T></div>
          <div className="mt-[4px] h-[119px] rounded-[2px] border border-[#d3d3d3] bg-[#ececec] pl-[4px] pt-[12px]">
            <div className="flex h-[17px] items-center"><Check /><T w={121} className="ml-[6px] mt-[3px]">Twórz pole wirtualne</T></div>
            <div className="mt-[6px] flex h-[26px] items-center">
              <div className="w-[157px] shrink-0 pt-[2px]"><T w={38}>Nazwa</T></div>
              <div className={Field + "h-[26px] w-[276px] bg-white"} />
            </div>
            <div className="mt-[3px] flex h-6 items-center">
              <div className="w-[157px] shrink-0 pt-[2px]"><T w={21}>Typ</T></div>
              <div className={Field + Grad + "flex h-6 w-[276px] items-center justify-between pl-[4px] pr-[9px]"}>
                <T w={147} className="mt-[2px]">Liczba całkowita (integer)</T>
                <svg width="9" height="5"><path d="M0 0h9L4.500 5z" fill="#555" /></svg>
              </div>
            </div>
            <div className="mt-[4px] flex h-[22px] items-center">
              <div className="w-[157px] shrink-0 pt-[2px]"><T w={149}>Długość pola wyjściowego</T></div>
              <Spin v="10" />
              <div className="w-[102px] shrink-0 pl-[7px] pt-[2px]"><T w={65}>Dokładność</T></div>
              <Spin v="3" off />
            </div>
          </div>
        </div>
        <div className="ml-[8px] w-[300px] shrink-0">
          <div className="flex h-[17px] items-center"><Check /><T w={161} className="ml-[6px] mt-[5px] font-bold">Aktualizuj istniejące pole</T></div>
          <div className="mt-[4px] h-[119px] rounded-[2px] border border-[#d3d3d3] bg-[#ececec] pl-[4px] pt-[48px]">
            <div className={"h-[28px] w-[290px] rounded-[2px] border border-[#c0c0c0] " + Grad} />
          </div>
        </div>
      </div>
      <div className="mt-[7px] flex h-[30px] items-end pl-[13px]">
        <div className="flex h-[30px] w-[91px] shrink-0 items-center justify-center rounded-t-[3px] border border-b-0 border-[#a9a9a9] bg-gradient-to-b from-white to-[#f6f6f6] pt-[3px]"><T w={59}>Wyrażenie</T></div>
        <div className="flex h-[28px] w-[106px] shrink-0 items-center justify-center rounded-tr-[3px] border border-l-0 border-[#b4b4b4] bg-[#e6e6e6] pt-[3px]"><T w={76}>Edytor funkcji</T></div>
        <div className="h-px flex-1 bg-[#b4b4b4]" />
      </div>
      <div className="flex pl-[24px] pt-[12px]">
        <div className="w-[424px] shrink-0">
          <div className="flex gap-[2px]">
            <Btn><I s={20}><path d="M4.500 1.500h10l5 5v16h-15z" fill="#fff" stroke="#666" /><path d="M14.500 1.500v5h5" stroke="#666" /></I></Btn>
            <Btn><I s={20}><Disk /></I></Btn>
            <Btn off><I s={20} off><Page /><g transform="translate(4 1)"><Pencil c="#bbb" /></g></I></Btn>
            <Btn off><I s={20} off><Trash /></I></Btn>
            <Btn><I s={20}><path d="M10.500 1h3v8H17l-5 6-5-6h3.500z" fill={BL} stroke={DB} strokeWidth="1.200" /><path d="M1 17h5v2h12v-2h5v5H1z" fill={BL} stroke={DB} /></I></Btn>
            <Btn><I s={20}><path d="M10.500 16h3V8H17l-5-6.500L7 8h3.500z" fill="#fce94f" stroke="#c4a000" strokeWidth="1.200" /><path d="M1 17h5v2h12v-2h5v5H1z" fill={BL} stroke={DB} /></I></Btn>
          </div>
          <div className="mt-[7px] h-[215px] border border-[#b0b0b0] bg-white px-[1px]">
            <div className="flex h-[21px] items-center bg-[#eeeeee] font-['Liberation_Mono',monospace] text-[16.660px] leading-[21px] text-[#4b78b4]">
              <span>count</span>
              <span className="bg-[#b4fa05] text-[#333]">(</span>
              <span>cat</span>
              <span className="bg-[#b4fa05] text-[#333]">)</span>
            </div>
          </div>
          <div className="mt-[7px] flex gap-[2.200px]">
            {["=", "+", "-", "/", "*", "^", "||", "(", ")", "'\\n'"].map((o) => <Btn key={o} h="h-[25px]"><span className="pt-[2px]">{o}</span></Btn>)}
          </div>
          <div className="mt-[10px] flex h-[27px] items-center">
            <div className="w-[43px] shrink-0 pt-[1px]"><T w={36}>Obiekt</T></div>
            <div className={Field + "flex h-6 w-[311px] items-stretch overflow-hidden bg-white"}>
              <div className="flex flex-1 items-center pl-[3px] pt-[1px]"><T w={66}>Operational</T></div>
              <div className={"flex w-[24px] items-center pl-[6px] " + Grad}><svg width="9" height="5"><path d="M0 0h9L4.500 5z" fill="#555" /></svg></div>
            </div>
            <div className="w-[7px]" />
            <Btn off><svg width="12" height="18" viewBox="0 0 12 18"><path d="M11 1v16L1 9z" fill="#d6dade" stroke="#b8bcc0" /></svg></Btn>
            <div className="w-[7px]" />
            <Btn><svg width="13" height="18" viewBox="0 0 13 18"><path d="M1 1v16l11-8z" fill="#5f96cf" stroke="#2f527a" /></svg></Btn>
          </div>
          <div className="mt-[8px] flex h-[15px] items-center"><T w={49}>Podgląd:</T><T w={21} className="ml-[7px]">662</T></div>
        </div>
        <div className="flex h-[341px] w-[26px] shrink-0 justify-center pt-[164px]">
          <svg width="1" height="17"><path d="M0.500 0v17" stroke="#b0b0b0" strokeDasharray="1 2" /></svg>
        </div>
        <div className="w-[300px] shrink-0">
          <div className="flex gap-[7px]">
            <div className={Field + "flex h-[26px] w-[160px] shrink-0 items-center bg-white text-[#8a8a8a]"}>
              <svg width="16" height="16" viewBox="0 0 16 16" fill="none" stroke="#8a8a8a" strokeWidth="1.500" className="ml-[9px]"><circle cx="6.500" cy="6.500" r="5.300" /><path d="M10.500 10.500l4.500 4.500" /></svg>
              <T w={49} className="ml-[8px] mt-[1px]">Szukaj...</T>
            </div>
            <div className={Field + Grad + "flex h-[26px] w-[130px] shrink-0 items-center pl-[3px] pt-[1px] text-[#8a8a8a]"}><T w={74}>Pokaż pomoc</T></div>
          </div>
          <div className="mt-[8px] h-[307px] overflow-hidden border border-[#b0b0b0] bg-white font-['Open_Sans',sans-serif] text-[14.500px] leading-5">
            <div className="h-5 pl-[28px]"><T w={88} className="font-bold">row_number</T></div>
            {FUNCS.map(([f, w]) => (
              <div key={f} className="flex h-5 items-center pl-[10px]">
                <RightTri />
                <div className="ml-[9px] h-5 flex-1 bg-[#c0c0c0] pl-[3px]"><T w={w}>{f}</T></div>
              </div>
            ))}
          </div>
        </div>
      </div>
      <div className="mt-[45px] flex h-[32px] items-center pl-[24px]">
        <svg width="32" height="33" viewBox="0 0 32 33" className="shrink-0">
          <path d="M17 3a14 12 0 0 1 4 24l1 5-6-5A14 12 0 0 1 17 3z" fill="#8a8a8a" />
          <path d="M15 1a14 12 0 0 1 4 24l0 6-6-6A14 12 0 0 1 15 1z" fill="#fff" stroke="#555" />
          <circle cx="15" cy="6.500" r="2.700" fill="#00f" />
          <path d="M11 10.500h6.500v8.500h2v2h-9v-2h2.500v-6.500H11z" fill="#00f" />
        </svg>
        <T w={597} className="ml-[39px] mt-[2px]">Edytujesz informacje w tej warstwie, ale nie znajduje się ona w trybie edycji. Jeśli klikniesz OK, zostanie</T>
      </div>
    </div>
  );
}

export default function App() {
  return (
    <div className="relative flex h-screen w-full flex-col overflow-hidden bg-[#efefef] font-['Open_Sans',sans-serif] text-[14.500px] leading-5 text-black">
      <div className="h-[9px] shrink-0 bg-white">
        <svg width="200" height="4" viewBox="0 0 200 4" fill="none" className="block">
          <path d="M0 0h9l4 0 1 3h-4L7 1.500 3 2.500H0z" fill="#5a9e2f" />
          <path d="M50 0l-3 1.500M142 0l-2.500 1.500M176 1.500h3" stroke="#888" />
        </svg>
      </div>
      <div className="flex h-[25px] shrink-0 items-center gap-[14px] border-b border-[#d4d4d4] pl-[4px] pt-[1px] text-[#a0a0a0]">
        {MENU.map(([a, u, b, w]) => (
          <T key={a + u + b} w={w}>{a}<span className="underline decoration-1 underline-offset-2">{u}</span>{b}</T>
        ))}
      </div>
      <Toolbar1 />
      <Toolbar2 />
      <Toolbar3 />
      <div className="flex min-h-0 flex-1">
        <div className="flex w-[707px] shrink-0 flex-col">
          <BrowserDock />
          <LayersDock />
        </div>
        <div className="flex w-[7px] shrink-0 justify-center pt-[408px]">
          <svg width="1" height="17"><path d="M0.500 0v17" stroke="#b0b0b0" strokeDasharray="1 2" /></svg>
        </div>
        <div className="mt-[1px] w-[845px] shrink-0 border-x border-t border-[#b0b0b0] bg-white"><MapCanvas /></div>
        <div className="flex flex-1 flex-col pl-[7px]">
          <div className="flex h-[20px] shrink-0 items-center pl-[4px] pt-[3px]"><T w={116}>Podgląd wyników</T></div>
          <div className="flex-1 border-l border-t border-[#b0b0b0] bg-white" />
        </div>
      </div>
      <Dialog />
    </div>
  );
}
